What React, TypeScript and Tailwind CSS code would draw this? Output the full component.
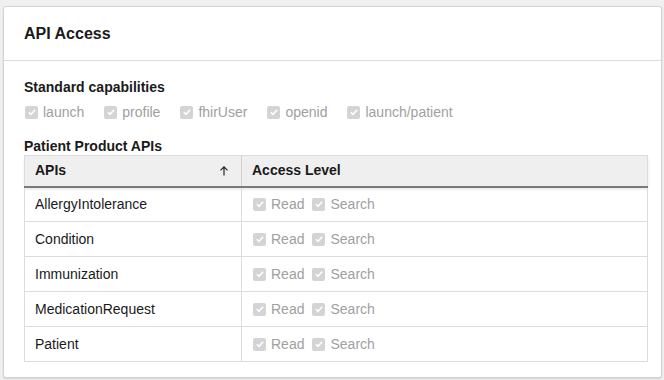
import React from 'react';

const capabilities = ['launch', 'profile', 'fhirUser', 'openid', 'launch/patient'];
const apis = ['AllergyIntolerance', 'Condition', 'Immunization', 'MedicationRequest', 'Patient'];

function DisabledCheck({ label }: { label: string }) {
  return (
    <label className="flex items-center text-[#a0a0a0]">
      <span className="flex h-[13px] w-[13px] items-center justify-center rounded-[2px] bg-[#d4d4d4]">
        <svg viewBox="0 0 12 12" className="h-[10px] w-[10px]">
          <path d="M2.2 6.3 L4.8 8.8 L9.8 3.2" fill="none" stroke="#ffffff" strokeWidth="1.8" />
        </svg>
      </span>
      <span className="ml-[5px]">{label}</span>
    </label>
  );
}

export default function App() {
  return (
    <div className="h-[380px] w-[664px] bg-[#f0f0f0] pl-[3px] pr-[2px] pt-[6px] font-['Liberation_Sans',Arial,sans-serif]">
      <div className="h-[372px] rounded-[3px] border border-[#d3d3d3] bg-white shadow-[0_1px_2px_rgba(0,0,0,0.12)]">
        {/* Header */}
        <div className="flex h-[54px] items-center border-b border-[#dcdcdc] px-[20px]">
          <h2 className="text-[16px] font-bold text-[#1a1a1a]">API Access</h2>
        </div>

        <div className="px-[20px] pt-[18px]">
          {/* Standard capabilities */}
          <div className="text-[14px] font-bold leading-[16px] text-[#1a1a1a]">Standard capabilities</div>
          <div className="mt-[9px] flex items-center gap-[20px] pl-[1px] text-[14px] leading-[16px]">
            {capabilities.map((c) => (
              <DisabledCheck key={c} label={c} />
            ))}
          </div>

          {/* Patient Product APIs */}
          <div className="mt-[18px] text-[14px] font-bold leading-[16px] text-[#1a1a1a]">Patient Product APIs</div>
          <table className="mt-[1px] w-[624px] border-collapse border border-[#dcdcdc] text-[14px]">
            <thead>
              <tr className="h-[31px] bg-[#efefef] shadow-[0_2px_3px_rgba(0,0,0,0.12)]">
                <th className="w-[217px] border-b-2 border-r border-b-[#7a7a7a] border-r-[#d0d0d0] px-[10px] text-left font-bold text-[#1a1a1a]">
                  <div className="flex items-center justify-between">
                    <span>APIs</span>
                    <svg viewBox="0 0 12 12" className="mr-[1px] h-[12px] w-[12px]">
                      <path d="M6 10.5 V2 M2.5 5.3 L6 1.8 L9.5 5.3" fill="none" stroke="#222" strokeWidth="1.2" />
                    </svg>
                  </div>
                </th>
                <th className="border-b-2 border-b-[#7a7a7a] px-[10px] text-left font-bold text-[#1a1a1a]">Access Level</th>
              </tr>
            </thead>
            <tbody>
              {apis.map((a) => (
                <tr key={a} className="h-[35px] border-b border-[#dcdcdc]">
                  <td className="border-r border-[#dcdcdc] px-[10px] text-[#1a1a1a]">{a}</td>
                  <td className="px-[11px]">
                    <div className="flex items-center gap-[8px]">
                      <DisabledCheck label="Read" />
                      <DisabledCheck label="Search" />
                    </div>
                  </td>
                </tr>
              ))}
            </tbody>
          </table>
        </div>
      </div>
    </div>
  );
}
